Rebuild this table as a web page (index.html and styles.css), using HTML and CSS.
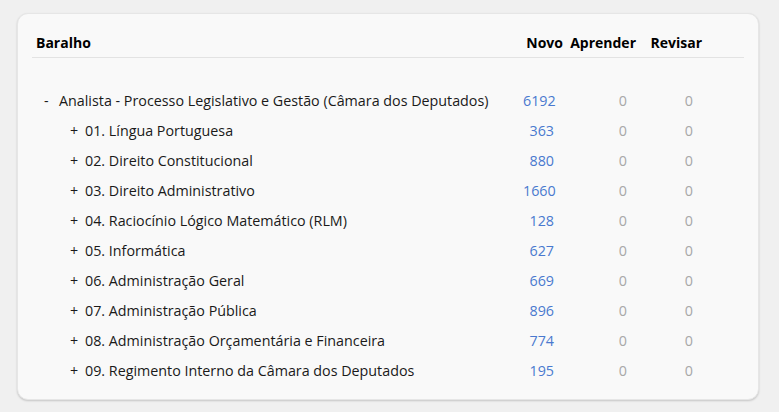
FILE: index.html
```html
<!DOCTYPE html>
<html lang="pt">
<head>
<meta charset="utf-8">
<link rel="stylesheet" href="styles.css">
</head>
<body>
<div class="card">
  <table class="decks">
    <colgroup>
      <col class="c-deck">
      <col class="c-new">
      <col class="c-learn">
      <col class="c-review">
      <col class="c-opt">
    </colgroup>
    <thead>
      <tr>
        <th class="deck-col">Baralho</th>
        <th class="num-col">Novo</th>
        <th class="num-col">Aprender</th>
        <th class="num-col">Revisar</th>
        <th class="opt-col"></th>
      </tr>
    </thead>
    <tbody>
      <tr class="spacer"><td colspan="5"></td></tr>
      <tr>
        <td class="deck"><span class="toggle">-</span>Analista - Processo Legislativo e Gestão (Câmara dos Deputados)</td>
        <td class="new">6192</td><td class="zero">0</td><td class="zero">0</td><td></td>
      </tr>
      <tr>
        <td class="deck sub"><span class="toggle">+</span>01. Língua Portuguesa</td>
        <td class="new">363</td><td class="zero">0</td><td class="zero">0</td><td></td>
      </tr>
      <tr>
        <td class="deck sub"><span class="toggle">+</span>02. Direito Constitucional</td>
        <td class="new">880</td><td class="zero">0</td><td class="zero">0</td><td></td>
      </tr>
      <tr>
        <td class="deck sub"><span class="toggle">+</span>03. Direito Administrativo</td>
        <td class="new">1660</td><td class="zero">0</td><td class="zero">0</td><td></td>
      </tr>
      <tr>
        <td class="deck sub"><span class="toggle">+</span>04. Raciocínio Lógico Matemático (RLM)</td>
        <td class="new">128</td><td class="zero">0</td><td class="zero">0</td><td></td>
      </tr>
      <tr>
        <td class="deck sub"><span class="toggle">+</span>05. Informática</td>
        <td class="new">627</td><td class="zero">0</td><td class="zero">0</td><td></td>
      </tr>
      <tr>
        <td class="deck sub"><span class="toggle">+</span>06. Administração Geral</td>
        <td class="new">669</td><td class="zero">0</td><td class="zero">0</td><td></td>
      </tr>
      <tr>
        <td class="deck sub"><span class="toggle">+</span>07. Administração Pública</td>
        <td class="new">896</td><td class="zero">0</td><td class="zero">0</td><td></td>
      </tr>
      <tr>
        <td class="deck sub"><span class="toggle">+</span>08. Administração Orçamentária e Financeira</td>
        <td class="new">774</td><td class="zero">0</td><td class="zero">0</td><td></td>
      </tr>
      <tr>
        <td class="deck sub"><span class="toggle">+</span>09. Regimento Interno da Câmara dos Deputados</td>
        <td class="new">195</td><td class="zero">0</td><td class="zero">0</td><td></td>
      </tr>
    </tbody>
  </table>
</div>
</body>
</html>
```
FILE: styles.css
```css
html, body {
  margin: 0;
  padding: 0;
  background: #f0f0f0;
}
body {
  padding: 13px 20px 11px 17px;
  font-family: "Open Sans", "Noto Sans", sans-serif;
  font-size: 14.3px;
  color: #1a1a1a;
}
.card {
  width: 742px;
  height: 387px;
  box-sizing: border-box;
  background: #f9f9f9;
  border: 1px solid #e6e6e6;
  border-radius: 11px;
  box-shadow: 0 1px 2px rgba(0,0,0,0.18);
  padding: 19px 14px 0 14px;
}
.decks {
  border-collapse: collapse;
  table-layout: fixed;
  width: 712px;
}
.c-deck { width: 491px; }
.c-new { width: 40px; }
.c-learn { width: 73px; }
.c-review { width: 66px; }
.c-opt { width: 42px; }
.decks th {
  font-weight: 700;
  font-size: 14px;
  color: #000;
  height: 24px;
  padding: 0;
  vertical-align: top;
  white-space: nowrap;
  border-bottom: 1px solid #e3e3e3;
}
.decks th.deck-col { text-align: left; padding-left: 4px; }
.decks th.num-col { text-align: right; }
.decks .spacer td { height: 27px; }
.decks td {
  height: 30px;
  padding: 0;
  white-space: nowrap;
}
.decks td.deck { padding-left: 12px; }
.decks td.deck.sub { padding-left: 38px; }
.toggle { display: inline-block; width: 15px; }
.decks td.new { text-align: right; color: #4a79cf; padding-right: 9px; }
.decks td.zero { text-align: right; color: #a8a8a8; padding-right: 9px; }
```
